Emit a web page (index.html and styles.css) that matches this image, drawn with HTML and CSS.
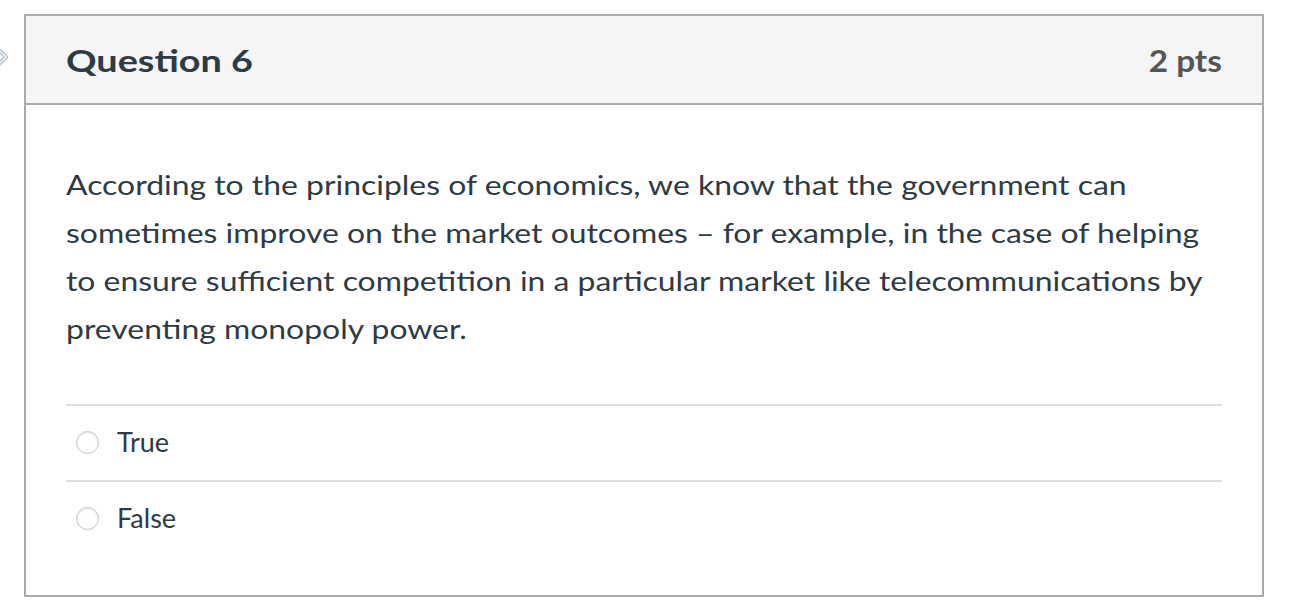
FILE: index.html
```html
<!DOCTYPE html>
<html>
<head>
<meta charset="utf-8">
<link rel="stylesheet" href="styles.css">
</head>
<body>
<div class="page">
  <svg class="nav-arrow" width="14" height="36" viewBox="0 0 14 36"><path d="M-8 4 L6 18 L-8 32" fill="none" stroke="#a9c3d3" stroke-width="4" stroke-linejoin="round"/><path d="M-8 4 L6 18 L-8 32" fill="none" stroke="#ffffff" stroke-width="1.2" stroke-linejoin="round"/></svg>
  <div class="question">
    <div class="q-header">
      <span class="q-title">Question 6</span>
      <span class="q-pts">2 pts</span>
    </div>
    <div class="q-body">
      <p class="q-text">According to the principles of economics, we know that the government can sometimes improve on the market outcomes – for example, in the case of helping to ensure sufficient competition in a particular market like telecommunications by preventing monopoly power.</p>
      <div class="answers">
        <label class="answer"><span class="radio"></span><span class="a-text">True</span></label>
        <label class="answer"><span class="radio"></span><span class="a-text">False</span></label>
      </div>
    </div>
  </div>
</div>
</body>
</html>
```

FILE: styles.css
```css
html, body {
  margin: 0;
  padding: 0;
  background: #fff;
}
body {
  font-family: Lato, "Liberation Sans", sans-serif;
  color: #2d3b45;
}
.page {
  position: relative;
  padding: 14px 0 0 24px;
}
.nav-arrow {
  position: absolute;
  left: 0;
  top: 39px;
}
.question {
  width: 1240px;
  height: 583px;
  box-sizing: border-box;
  border: 2px solid #aaaaaa;
  display: flex;
  flex-direction: column;
}
.q-header {
  height: 87px;
  background: #f5f5f5;
  border-bottom: 2px solid #aaaaaa;
  display: flex;
  align-items: center;
  justify-content: space-between;
  padding: 0 40px 0 40px;
}
.q-title {
  display: inline-block;
  font-weight: 700;
  font-size: 31px;
  color: #2d3b45;
  transform: scaleX(1.22);
  transform-origin: left center;
}
.q-pts {
  display: inline-block;
  font-weight: 700;
  font-size: 30px;
  color: #555555;
  transform: scaleX(1.11);
  transform-origin: right center;
}
.q-body {
  padding: 56px 40px 0 40px;
}
.q-text {
  margin: 0;
  width: 942px;
  font-size: 26px;
  line-height: 48px;
  transform: scaleX(1.227);
  transform-origin: left top;
}
.answers {
  margin-top: 51px;
}
.answer {
  display: flex;
  align-items: center;
  height: 74px;
  box-sizing: content-box;
  padding-bottom: 0;
  border-top: 2px solid #dddddd;
}
.radio {
  width: 21px;
  height: 21px;
  border-radius: 50%;
  border: 1px solid #c4c4c4;
  box-shadow: inset 0 1px 2px rgba(0,0,0,0.1);
  margin-left: 10px;
  margin-right: 18px;
  margin-top: -2px;
  background: #fff;
}
.a-text {
  font-size: 27px;
  margin-top: -4px;
}
```
